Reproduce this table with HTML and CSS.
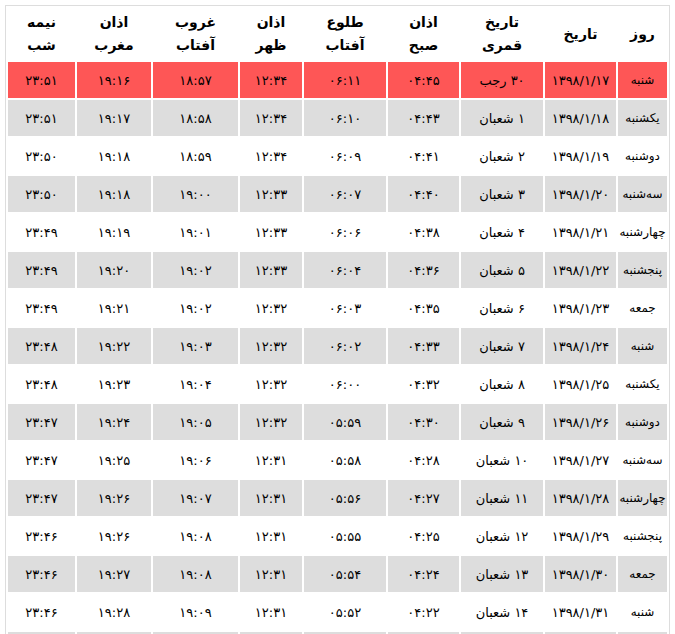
FILE: index.html
```html
<!DOCTYPE html>
<html lang="fa" dir="rtl">
<head>
<meta charset="utf-8">
<title>اوقات شرعی</title>
<link rel="stylesheet" href="styles.css">
</head>
<body>
<div class="wrap">
<table class="times">
<thead>
<tr>
<th class="c-day">روز</th>
<th class="c-date">تاریخ</th>
<th class="c-moon">تاریخ<br>قمری</th>
<th class="c-fajr">اذان<br>صبح</th>
<th class="c-rise">طلوع<br>آفتاب</th>
<th class="c-noon">اذان<br>ظهر</th>
<th class="c-set">غروب<br>آفتاب</th>
<th class="c-magh">اذان<br>مغرب</th>
<th class="c-mid">نیمه<br>شب</th>
</tr>
</thead>
<tbody>
<tr class="today"><td>شنبه</td><td>۱۳۹۸/۱/۱۷</td><td>۳۰ رجب</td><td>۰۴:۴۵</td><td>۰۶:۱۱</td><td>۱۲:۳۴</td><td>۱۸:۵۷</td><td>۱۹:۱۶</td><td>۲۳:۵۱</td></tr>
<tr class="alt"><td>یکشنبه</td><td>۱۳۹۸/۱/۱۸</td><td>۱ شعبان</td><td>۰۴:۴۳</td><td>۰۶:۱۰</td><td>۱۲:۳۴</td><td>۱۸:۵۸</td><td>۱۹:۱۷</td><td>۲۳:۵۱</td></tr>
<tr><td>دوشنبه</td><td>۱۳۹۸/۱/۱۹</td><td>۲ شعبان</td><td>۰۴:۴۱</td><td>۰۶:۰۹</td><td>۱۲:۳۴</td><td>۱۸:۵۹</td><td>۱۹:۱۸</td><td>۲۳:۵۰</td></tr>
<tr class="alt"><td>سه‌شنبه</td><td>۱۳۹۸/۱/۲۰</td><td>۳ شعبان</td><td>۰۴:۴۰</td><td>۰۶:۰۷</td><td>۱۲:۳۳</td><td>۱۹:۰۰</td><td>۱۹:۱۸</td><td>۲۳:۵۰</td></tr>
<tr><td>چهارشنبه</td><td>۱۳۹۸/۱/۲۱</td><td>۴ شعبان</td><td>۰۴:۳۸</td><td>۰۶:۰۶</td><td>۱۲:۳۳</td><td>۱۹:۰۱</td><td>۱۹:۱۹</td><td>۲۳:۴۹</td></tr>
<tr class="alt"><td>پنجشنبه</td><td>۱۳۹۸/۱/۲۲</td><td>۵ شعبان</td><td>۰۴:۳۶</td><td>۰۶:۰۴</td><td>۱۲:۳۳</td><td>۱۹:۰۲</td><td>۱۹:۲۰</td><td>۲۳:۴۹</td></tr>
<tr><td>جمعه</td><td>۱۳۹۸/۱/۲۳</td><td>۶ شعبان</td><td>۰۴:۳۵</td><td>۰۶:۰۳</td><td>۱۲:۳۲</td><td>۱۹:۰۲</td><td>۱۹:۲۱</td><td>۲۳:۴۹</td></tr>
<tr class="alt"><td>شنبه</td><td>۱۳۹۸/۱/۲۴</td><td>۷ شعبان</td><td>۰۴:۳۳</td><td>۰۶:۰۲</td><td>۱۲:۳۲</td><td>۱۹:۰۳</td><td>۱۹:۲۲</td><td>۲۳:۴۸</td></tr>
<tr><td>یکشنبه</td><td>۱۳۹۸/۱/۲۵</td><td>۸ شعبان</td><td>۰۴:۳۲</td><td>۰۶:۰۰</td><td>۱۲:۳۲</td><td>۱۹:۰۴</td><td>۱۹:۲۳</td><td>۲۳:۴۸</td></tr>
<tr class="alt"><td>دوشنبه</td><td>۱۳۹۸/۱/۲۶</td><td>۹ شعبان</td><td>۰۴:۳۰</td><td>۰۵:۵۹</td><td>۱۲:۳۲</td><td>۱۹:۰۵</td><td>۱۹:۲۴</td><td>۲۳:۴۷</td></tr>
<tr><td>سه‌شنبه</td><td>۱۳۹۸/۱/۲۷</td><td>۱۰ شعبان</td><td>۰۴:۲۸</td><td>۰۵:۵۸</td><td>۱۲:۳۱</td><td>۱۹:۰۶</td><td>۱۹:۲۵</td><td>۲۳:۴۷</td></tr>
<tr class="alt"><td>چهارشنبه</td><td>۱۳۹۸/۱/۲۸</td><td>۱۱ شعبان</td><td>۰۴:۲۷</td><td>۰۵:۵۶</td><td>۱۲:۳۱</td><td>۱۹:۰۷</td><td>۱۹:۲۶</td><td>۲۳:۴۷</td></tr>
<tr><td>پنجشنبه</td><td>۱۳۹۸/۱/۲۹</td><td>۱۲ شعبان</td><td>۰۴:۲۵</td><td>۰۵:۵۵</td><td>۱۲:۳۱</td><td>۱۹:۰۸</td><td>۱۹:۲۶</td><td>۲۳:۴۶</td></tr>
<tr class="alt"><td>جمعه</td><td>۱۳۹۸/۱/۳۰</td><td>۱۳ شعبان</td><td>۰۴:۲۴</td><td>۰۵:۵۴</td><td>۱۲:۳۱</td><td>۱۹:۰۸</td><td>۱۹:۲۷</td><td>۲۳:۴۶</td></tr>
<tr><td>شنبه</td><td>۱۳۹۸/۱/۳۱</td><td>۱۴ شعبان</td><td>۰۴:۲۲</td><td>۰۵:۵۲</td><td>۱۲:۳۱</td><td>۱۹:۰۹</td><td>۱۹:۲۸</td><td>۲۳:۴۶</td></tr>
<tr class="alt"><td></td><td></td><td></td><td></td><td></td><td></td><td></td><td></td><td></td></tr>
</tbody>
</table>
</div>
</body>
</html>
```

FILE: styles.css
```css
html, body {
  margin: 0;
  padding: 0;
  background: #ffffff;
}
body {
  font-family: "DejaVu Sans", "Liberation Sans", sans-serif;
  color: #000000;
}
.wrap {
  padding: 5px 5px 0 6px;
}
.times {
  border: 1px solid #dddddd;
  border-spacing: 2px;
  table-layout: fixed;
  width: 665px;
}
.times th,
.times td {
  padding: 0;
  text-align: center;
  vertical-align: middle;
}
.times th {
  height: 52px;
  font-size: 14px;
  font-weight: bold;
  line-height: 23px;
  background: #ffffff;
}
.times td {
  height: 36px;
  font-size: 13px;
  white-space: nowrap;
}
.times td:first-child {
  font-size: 12px;
}
.times tr.alt td {
  background: #dddddd;
}
.times tr.today td {
  background: #fe5656;
}
.c-day { width: 49px; }
.c-date { width: 71px; }
.c-moon { width: 82px; }
.c-fajr { width: 71px; }
.c-rise { width: 82px; }
.c-noon { width: 62px; }
.c-set { width: 85px; }
.c-magh { width: 74px; }
.c-mid { width: 67px; }
```
